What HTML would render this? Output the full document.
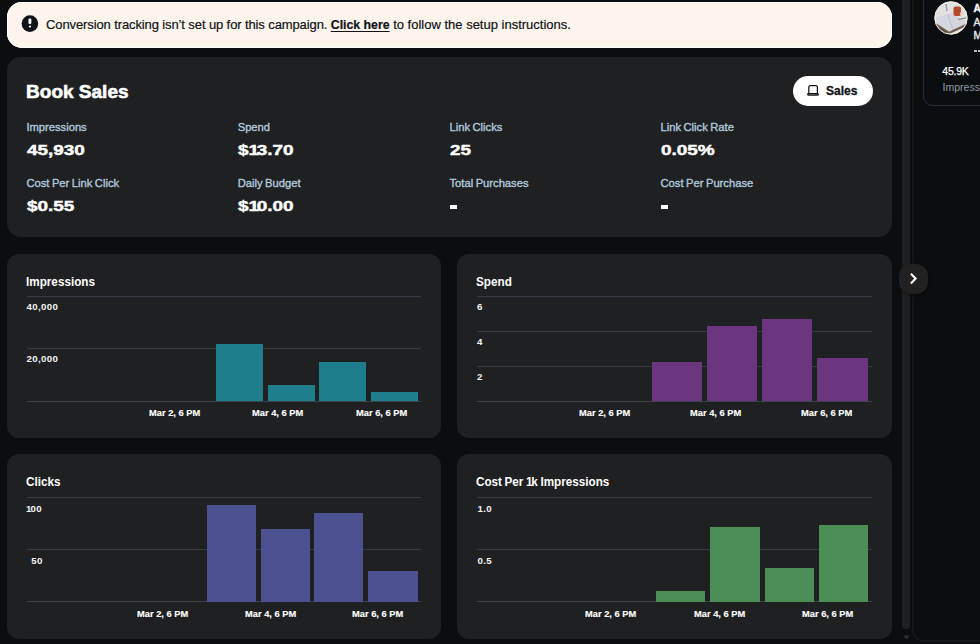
<!DOCTYPE html>
<html><head><meta charset="utf-8"><style>
html,body{margin:0;padding:0;width:980px;height:644px;overflow:hidden;background:#0b0e11;font-family:"Liberation Sans",sans-serif;}
.t{position:absolute;white-space:nowrap;}
.r{position:absolute;}
</style></head><body>
<div class="r" style="left:7.00px;top:2.30px;width:885.00px;height:45.70px;background:#fdf4ec;border-radius:15px;box-shadow:inset 0 0 0 1px #fff;"></div>
<svg class="r" style="left:21px;top:15px" width="18" height="18" viewBox="0 0 18 18"><circle cx="8.9" cy="8.6" r="8.3" fill="#0f1419"/><rect x="7.45" y="3.6" width="2.9" height="5.4" rx="1.2" fill="#fff"/><circle cx="8.9" cy="11.55" r="1.15" fill="#fff"/></svg>
<div class="t" style="left:46.00px;top:17.95px;font-size:13px;line-height:13px;color:#0f1419;font-weight:normal;-webkit-text-stroke:0.2px #0f1419;"><span style="letter-spacing:-0.11px">Conversion tracking isn’t set up for this campaign. </span><b style="text-decoration:underline;text-underline-offset:1.5px;text-decoration-thickness:1px;font-size:12.3px">Click here</b><span style="letter-spacing:0px"> to follow the setup instructions.</span></div>
<div class="r" style="left:7.00px;top:57.00px;width:885.00px;height:180.00px;background:#1f2022;border-radius:14px;"></div>
<div class="t" style="left:26.10px;top:82.05px;font-size:19px;line-height:19px;color:#fff;font-weight:bold;-webkit-text-stroke:0.6px #fff;">Book Sales</div>
<div class="r" style="left:793.00px;top:75.60px;width:79.80px;height:30.10px;background:#fff;border-radius:15px;"></div>
<svg class="r" style="left:806px;top:84px" width="15" height="13" viewBox="0 0 15 13"><path d="M2.8 9.6 V3.2 Q2.8 1.6 4.4 1.6 H9.8 Q11.4 1.6 11.4 3.2 V9.6" fill="none" stroke="#0f1419" stroke-width="1.25"/><path d="M2.5 9.6 H11.5 Q12.3 9.6 12.3 10.4 Q12.3 11.15 11.5 11.15 H2.5 Q1.7 11.15 1.7 10.4 Q1.7 9.6 2.5 9.6 Z" fill="none" stroke="#0f1419" stroke-width="1.25"/></svg>
<div class="t" style="left:826.00px;top:84.80px;font-size:12px;line-height:12px;color:#0f1419;font-weight:bold;-webkit-text-stroke:0.3px #0f1419;">Sales</div>
<div class="t" style="left:26.40px;top:121.98px;font-size:11.2px;line-height:11.2px;color:#b2c8dd;font-weight:normal;-webkit-text-stroke:0.35px #b2c8dd;word-spacing:-0.6px;">Impressions</div>
<div class="t" style="left:26.70px;top:142.41px;font-size:15.4px;line-height:15.4px;color:#fff;font-weight:bold;transform:scaleX(1.23);transform-origin:left;-webkit-text-stroke:0.45px #fff;">45,930</div>
<div class="t" style="left:26.40px;top:177.98px;font-size:11.2px;line-height:11.2px;color:#b2c8dd;font-weight:normal;-webkit-text-stroke:0.35px #b2c8dd;word-spacing:-0.6px;">Cost Per Link Click</div>
<div class="t" style="left:26.70px;top:198.11px;font-size:15.4px;line-height:15.4px;color:#fff;font-weight:bold;transform:scaleX(1.23);transform-origin:left;-webkit-text-stroke:0.45px #fff;">$0.55</div>
<div class="t" style="left:237.70px;top:121.98px;font-size:11.2px;line-height:11.2px;color:#b2c8dd;font-weight:normal;-webkit-text-stroke:0.35px #b2c8dd;word-spacing:-0.6px;">Spend</div>
<div class="t" style="left:238.00px;top:142.41px;font-size:15.4px;line-height:15.4px;color:#fff;font-weight:bold;transform:scaleX(1.23);transform-origin:left;-webkit-text-stroke:0.45px #fff;">$<span style="letter-spacing:-1.9px">1</span>3.70</div>
<div class="t" style="left:237.70px;top:177.98px;font-size:11.2px;line-height:11.2px;color:#b2c8dd;font-weight:normal;-webkit-text-stroke:0.35px #b2c8dd;word-spacing:-0.6px;">Daily Budget</div>
<div class="t" style="left:238.00px;top:198.11px;font-size:15.4px;line-height:15.4px;color:#fff;font-weight:bold;transform:scaleX(1.23);transform-origin:left;-webkit-text-stroke:0.45px #fff;">$<span style="letter-spacing:-1.9px">1</span>0.00</div>
<div class="t" style="left:449.50px;top:121.98px;font-size:11.2px;line-height:11.2px;color:#b2c8dd;font-weight:normal;-webkit-text-stroke:0.35px #b2c8dd;word-spacing:-0.6px;">Link Clicks</div>
<div class="t" style="left:449.80px;top:142.41px;font-size:15.4px;line-height:15.4px;color:#fff;font-weight:bold;transform:scaleX(1.23);transform-origin:left;-webkit-text-stroke:0.45px #fff;">25</div>
<div class="t" style="left:449.50px;top:177.98px;font-size:11.2px;line-height:11.2px;color:#b2c8dd;font-weight:normal;-webkit-text-stroke:0.35px #b2c8dd;word-spacing:-0.6px;">Total Purchases</div>
<div class="r" style="left:449.60px;top:204.50px;width:7.20px;height:4.30px;background:#fff;"></div>
<div class="t" style="left:660.50px;top:121.98px;font-size:11.2px;line-height:11.2px;color:#b2c8dd;font-weight:normal;-webkit-text-stroke:0.35px #b2c8dd;word-spacing:-0.6px;">Link Click Rate</div>
<div class="t" style="left:660.80px;top:142.41px;font-size:15.4px;line-height:15.4px;color:#fff;font-weight:bold;transform:scaleX(1.23);transform-origin:left;-webkit-text-stroke:0.45px #fff;">0.05%</div>
<div class="t" style="left:660.50px;top:177.98px;font-size:11.2px;line-height:11.2px;color:#b2c8dd;font-weight:normal;-webkit-text-stroke:0.35px #b2c8dd;word-spacing:-0.6px;">Cost Per Purchase</div>
<div class="r" style="left:660.60px;top:204.50px;width:7.20px;height:4.30px;background:#fff;"></div>
<div class="r" style="left:7.00px;top:253.50px;width:433.60px;height:184.50px;background:#1f2022;border-radius:12px;"></div>
<div class="r" style="left:457.00px;top:253.50px;width:435.00px;height:184.50px;background:#1f2022;border-radius:12px;"></div>
<div class="r" style="left:7.00px;top:454.30px;width:433.60px;height:184.30px;background:#1f2022;border-radius:12px;"></div>
<div class="r" style="left:457.00px;top:454.30px;width:435.00px;height:184.30px;background:#1f2022;border-radius:12px;"></div>
<div class="t" style="left:26.30px;top:275.62px;font-size:12.8px;line-height:12.8px;color:#fff;font-weight:bold;transform:scaleX(0.915);transform-origin:left;word-spacing:-0.8px;">Impressions</div>
<div class="r" style="left:26.50px;top:295.90px;width:394.50px;height:1.20px;background:#343b44;"></div>
<div class="r" style="left:26.50px;top:348.30px;width:394.50px;height:1.20px;background:#343b44;"></div>
<div class="r" style="left:26.50px;top:400.60px;width:394.50px;height:1.10px;background:#3b434c;"></div>
<div class="t" style="left:26.50px;top:301.95px;font-size:9.7px;line-height:9.7px;color:#f4f4f4;font-weight:bold;letter-spacing:0.35px;">40,000</div>
<div class="t" style="left:26.50px;top:354.45px;font-size:9.7px;line-height:9.7px;color:#f4f4f4;font-weight:bold;letter-spacing:0.35px;">20,000</div>
<div class="r" style="left:215.80px;top:344.00px;width:47.10px;height:57.10px;background:#1f7e8d;"></div>
<div class="r" style="left:267.80px;top:384.80px;width:46.80px;height:16.30px;background:#1f7e8d;"></div>
<div class="r" style="left:319.00px;top:362.00px;width:47.20px;height:39.10px;background:#1f7e8d;"></div>
<div class="r" style="left:370.70px;top:391.80px;width:47.10px;height:9.30px;background:#1f7e8d;"></div>
<div class="t" style="left:148.80px;top:408.17px;font-size:9.8px;line-height:9.8px;color:#fff;font-weight:bold;transform:scaleX(0.95);transform-origin:left;-webkit-text-stroke:0.15px #fff;">Mar 2, 6 PM</div>
<div class="t" style="left:252.30px;top:408.17px;font-size:9.8px;line-height:9.8px;color:#fff;font-weight:bold;transform:scaleX(0.95);transform-origin:left;-webkit-text-stroke:0.15px #fff;">Mar 4, 6 PM</div>
<div class="t" style="left:355.50px;top:408.17px;font-size:9.8px;line-height:9.8px;color:#fff;font-weight:bold;transform:scaleX(0.95);transform-origin:left;-webkit-text-stroke:0.15px #fff;">Mar 6, 6 PM</div>
<div class="t" style="left:476.30px;top:275.62px;font-size:12.8px;line-height:12.8px;color:#fff;font-weight:bold;transform:scaleX(0.915);transform-origin:left;word-spacing:-0.8px;">Spend</div>
<div class="r" style="left:476.50px;top:295.90px;width:395.90px;height:1.20px;background:#343b44;"></div>
<div class="r" style="left:476.50px;top:330.90px;width:395.90px;height:1.20px;background:#343b44;"></div>
<div class="r" style="left:476.50px;top:365.70px;width:395.90px;height:1.20px;background:#343b44;"></div>
<div class="r" style="left:476.50px;top:400.60px;width:395.90px;height:1.10px;background:#3b434c;"></div>
<div class="t" style="left:477.00px;top:301.95px;font-size:9.7px;line-height:9.7px;color:#f4f4f4;font-weight:bold;letter-spacing:0.35px;">6</div>
<div class="t" style="left:477.00px;top:337.45px;font-size:9.7px;line-height:9.7px;color:#f4f4f4;font-weight:bold;letter-spacing:0.35px;">4</div>
<div class="t" style="left:477.00px;top:371.95px;font-size:9.7px;line-height:9.7px;color:#f4f4f4;font-weight:bold;letter-spacing:0.35px;">2</div>
<div class="r" style="left:651.50px;top:361.70px;width:50.20px;height:39.40px;background:#6b367f;"></div>
<div class="r" style="left:706.60px;top:325.90px;width:50.70px;height:75.20px;background:#6b367f;"></div>
<div class="r" style="left:762.20px;top:318.60px;width:50.20px;height:82.50px;background:#6b367f;"></div>
<div class="r" style="left:817.00px;top:358.20px;width:51.00px;height:42.90px;background:#6b367f;"></div>
<div class="t" style="left:579.30px;top:408.17px;font-size:9.8px;line-height:9.8px;color:#fff;font-weight:bold;transform:scaleX(0.95);transform-origin:left;-webkit-text-stroke:0.15px #fff;">Mar 2, 6 PM</div>
<div class="t" style="left:689.80px;top:408.17px;font-size:9.8px;line-height:9.8px;color:#fff;font-weight:bold;transform:scaleX(0.95);transform-origin:left;-webkit-text-stroke:0.15px #fff;">Mar 4, 6 PM</div>
<div class="t" style="left:801.00px;top:408.17px;font-size:9.8px;line-height:9.8px;color:#fff;font-weight:bold;transform:scaleX(0.95);transform-origin:left;-webkit-text-stroke:0.15px #fff;">Mar 6, 6 PM</div>
<div class="t" style="left:26.30px;top:476.42px;font-size:12.8px;line-height:12.8px;color:#fff;font-weight:bold;transform:scaleX(0.915);transform-origin:left;word-spacing:-0.8px;">Clicks</div>
<div class="r" style="left:26.50px;top:497.00px;width:394.50px;height:1.20px;background:#343b44;"></div>
<div class="r" style="left:26.50px;top:549.30px;width:394.50px;height:1.20px;background:#343b44;"></div>
<div class="r" style="left:26.50px;top:601.40px;width:394.50px;height:1.10px;background:#3b434c;"></div>
<div class="t" style="left:26.00px;top:503.56px;font-size:9.7px;line-height:9.7px;color:#f4f4f4;font-weight:bold;letter-spacing:0.35px;"><span style="letter-spacing:-0.9px">1</span>00</div>
<div class="t" style="left:31.20px;top:555.96px;font-size:9.7px;line-height:9.7px;color:#f4f4f4;font-weight:bold;letter-spacing:0.35px;">50</div>
<div class="r" style="left:206.70px;top:505.30px;width:49.80px;height:96.60px;background:#4d5191;"></div>
<div class="r" style="left:261.20px;top:529.40px;width:48.40px;height:72.50px;background:#4d5191;"></div>
<div class="r" style="left:314.20px;top:512.50px;width:49.30px;height:89.40px;background:#4d5191;"></div>
<div class="r" style="left:368.20px;top:570.50px;width:49.80px;height:31.40px;background:#4d5191;"></div>
<div class="t" style="left:136.60px;top:608.97px;font-size:9.8px;line-height:9.8px;color:#fff;font-weight:bold;transform:scaleX(0.95);transform-origin:left;-webkit-text-stroke:0.15px #fff;">Mar 2, 6 PM</div>
<div class="t" style="left:244.50px;top:608.97px;font-size:9.8px;line-height:9.8px;color:#fff;font-weight:bold;transform:scaleX(0.95);transform-origin:left;-webkit-text-stroke:0.15px #fff;">Mar 4, 6 PM</div>
<div class="t" style="left:352.40px;top:608.97px;font-size:9.8px;line-height:9.8px;color:#fff;font-weight:bold;transform:scaleX(0.95);transform-origin:left;-webkit-text-stroke:0.15px #fff;">Mar 6, 6 PM</div>
<div class="t" style="left:476.30px;top:476.42px;font-size:12.8px;line-height:12.8px;color:#fff;font-weight:bold;transform:scaleX(0.915);transform-origin:left;word-spacing:-0.8px;">Cost Per <span style="letter-spacing:-1.2px">1</span>k Impressions</div>
<div class="r" style="left:476.50px;top:497.00px;width:395.90px;height:1.20px;background:#343b44;"></div>
<div class="r" style="left:476.50px;top:549.30px;width:395.90px;height:1.20px;background:#343b44;"></div>
<div class="r" style="left:476.50px;top:601.40px;width:395.90px;height:1.10px;background:#3b434c;"></div>
<div class="t" style="left:477.50px;top:503.56px;font-size:9.7px;line-height:9.7px;color:#f4f4f4;font-weight:bold;letter-spacing:0.35px;">1.0</div>
<div class="t" style="left:477.50px;top:555.96px;font-size:9.7px;line-height:9.7px;color:#f4f4f4;font-weight:bold;letter-spacing:0.35px;">0.5</div>
<div class="r" style="left:655.60px;top:591.00px;width:49.30px;height:10.90px;background:#4b8e56;"></div>
<div class="r" style="left:710.00px;top:527.10px;width:50.00px;height:74.80px;background:#4b8e56;"></div>
<div class="r" style="left:764.70px;top:568.20px;width:49.30px;height:33.70px;background:#4b8e56;"></div>
<div class="r" style="left:818.70px;top:524.70px;width:49.30px;height:77.20px;background:#4b8e56;"></div>
<div class="t" style="left:585.20px;top:608.97px;font-size:9.8px;line-height:9.8px;color:#fff;font-weight:bold;transform:scaleX(0.95);transform-origin:left;-webkit-text-stroke:0.15px #fff;">Mar 2, 6 PM</div>
<div class="t" style="left:693.60px;top:608.97px;font-size:9.8px;line-height:9.8px;color:#fff;font-weight:bold;transform:scaleX(0.95);transform-origin:left;-webkit-text-stroke:0.15px #fff;">Mar 4, 6 PM</div>
<div class="t" style="left:802.40px;top:608.97px;font-size:9.8px;line-height:9.8px;color:#fff;font-weight:bold;transform:scaleX(0.95);transform-origin:left;-webkit-text-stroke:0.15px #fff;">Mar 6, 6 PM</div>
<div class="r" style="left:902.10px;top:-10.00px;width:8.10px;height:639.00px;background:#1f2022;border-radius:4px;"></div>
<svg class="r" style="left:902px;top:635px" width="9" height="5" viewBox="0 0 9 5"><path d="M1 0.6 H8 L4.5 4.6 Z" fill="#2a2b2d"/></svg>
<div class="r" style="left:911.60px;top:-20.00px;width:78.40px;height:661.50px;background:transparent;border:2px solid #141618;border-radius:12px;box-sizing:border-box;"></div>
<div class="r" style="left:922.80px;top:-20.00px;width:77.20px;height:125.80px;background:transparent;border:1.8px solid #2a2d31;border-radius:10px;box-sizing:border-box;"></div>
<svg class="r" style="left:934px;top:1px" width="34" height="34" viewBox="0 0 34 34"><defs><clipPath id="av"><circle cx="17" cy="17" r="16.4"/></clipPath></defs><g clip-path="url(#av)"><rect width="34" height="34" fill="#e2e1e0"/><path d="M2 17 L16 12 L30 19 L33 24 L16 32 L3 25 Z" fill="#d3d6de"/><path d="M14 14 L19 29" stroke="#b8bcc6" stroke-width="0.8"/><path d="M1 23 L15 32 L32 24" stroke="#6e5a4c" stroke-width="2.2" fill="none"/><path d="M4 27 L14 33" stroke="#4a3c34" stroke-width="1.5"/><rect x="19.5" y="5.5" width="7.5" height="9.5" rx="2" fill="#b34a2b"/><circle cx="27.5" cy="12.5" r="1.6" fill="#f1cbb8"/><path d="M24 18.5 L34 16.5" stroke="#7d8088" stroke-width="1"/><path d="M12 3 L13 10" stroke="#9aa3ad" stroke-width="1.6"/></g><circle cx="17" cy="17" r="16.2" fill="none" stroke="#f4f2f0" stroke-width="1"/></svg>
<div class="t" style="left:973.60px;top:3.63px;font-size:10.2px;line-height:10.2px;color:#fff;font-weight:bold;-webkit-text-stroke:0.3px #fff;">A</div>
<div class="t" style="left:973.60px;top:16.88px;font-size:10.5px;line-height:10.5px;color:#e7e9ea;font-weight:normal;-webkit-text-stroke:0.35px #e7e9ea;">A</div>
<div class="t" style="left:973.60px;top:29.98px;font-size:10.5px;line-height:10.5px;color:#e7e9ea;font-weight:normal;-webkit-text-stroke:0.35px #e7e9ea;">M</div>
<div class="r" style="left:974.00px;top:50.20px;width:2.50px;height:1.40px;background:#bbb;"></div>
<div class="r" style="left:977.50px;top:50.20px;width:2.50px;height:1.40px;background:#bbb;"></div>
<div class="t" style="left:942.30px;top:65.88px;font-size:10.5px;line-height:10.5px;color:#fff;font-weight:normal;letter-spacing:-0.25px;-webkit-text-stroke:0.25px #fff;">45.9K</div>
<div class="t" style="left:942.60px;top:81.98px;font-size:10.5px;line-height:10.5px;color:#8b98a5;font-weight:normal;">Impressions</div>
<div class="r" style="left:898.6px;top:264px;width:29.5px;height:29.5px;border-radius:12px;background:#222121;box-shadow:0 1px 3px rgba(0,0,0,0.4)"></div>
<svg class="r" style="left:905.8px;top:270px" width="17" height="17" viewBox="0 0 17 17"><path d="M4.9 3.8 L9.6 8.6 L4.9 13.4" fill="none" stroke="#fff" stroke-width="2.1" stroke-linecap="butt" stroke-linejoin="miter"/></svg>
</body></html>
